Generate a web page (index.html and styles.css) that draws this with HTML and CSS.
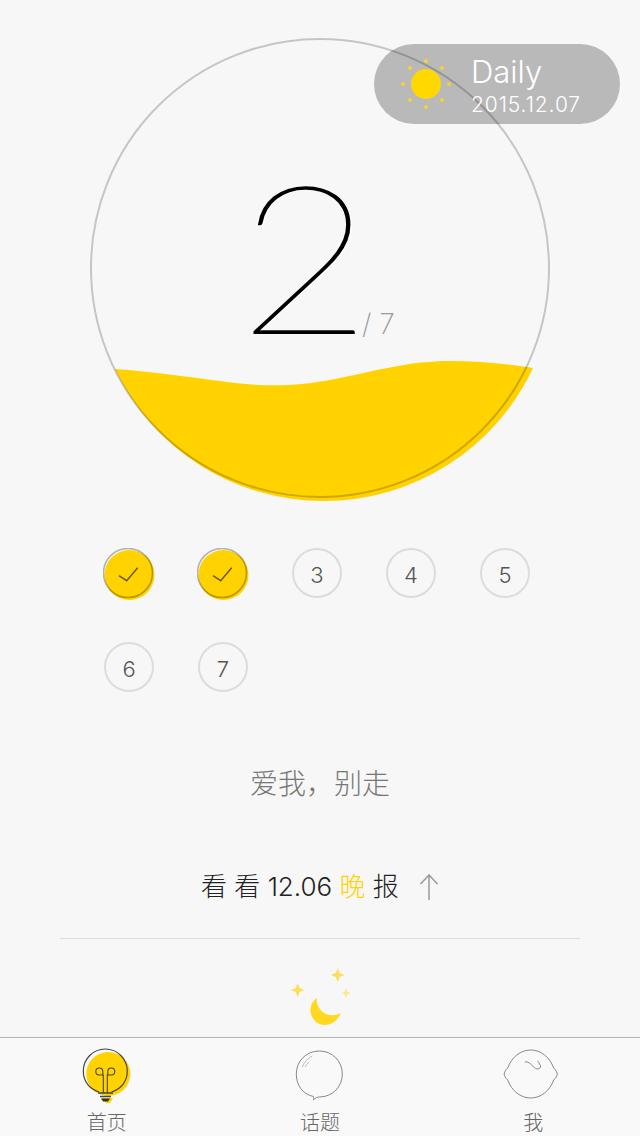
FILE: index.html
```html
<!DOCTYPE html>
<html lang="en">
<head>
  <meta charset="UTF-8">
  <meta name="viewport" content="width=device-width, initial-scale=1.0">
  <title>Daily</title>
  <link rel="stylesheet" href="styles.css">
</head>
<body>
  <div class="page">
    <section class="hero">
      <svg class="gauge" width="640" height="510" viewBox="0 0 640 510">
        <path d="M115 369 C160 372 200 379 235 383 C270 387 300 386 335 379 C380 370 410 361 450 361 C480 361 510 364 533 368 A231 231 0 0 1 115 369 Z" fill="#ffd200"/>
        <circle cx="320" cy="268" r="229" fill="none" stroke="#000" stroke-opacity="0.2" stroke-width="2"/>
      </svg>
      <div class="count">
        <span class="count-num">2</span>
        <span class="count-total">/ 7</span>
      </div>
      <div class="pill">
        <svg width="52" height="52" viewBox="0 0 52 52">
          <circle cx="26" cy="26" r="15" fill="#ffd800"/>
          <g fill="#f6d335">
            <circle cx="26" cy="3" r="2"/>
            <circle cx="42" cy="10" r="2"/>
            <circle cx="49" cy="26" r="2"/>
            <circle cx="42" cy="42" r="2"/>
            <circle cx="26" cy="49" r="2"/>
            <circle cx="10" cy="42" r="2"/>
            <circle cx="3" cy="26" r="2"/>
            <circle cx="10" cy="10" r="2"/>
          </g>
        </svg>
        <div class="pill-text">
          <div class="pill-title">Daily</div>
          <div class="pill-date">2015.12.07</div>
        </div>
      </div>
    </section>

    <div class="days">
      <div class="day day-done">
        <svg width="54" height="54" viewBox="0 0 54 54">
          <circle cx="26.5" cy="27" r="25" fill="#ffd200"/>
          <circle cx="25" cy="25" r="24.5" fill="none" stroke="#000" stroke-opacity="0.28" stroke-width="1.6"/>
          <path d="M16 27.700 L23.700 32.700 L34.700 19.700" fill="none" stroke="#6b5a12" stroke-width="1.500"/>
        </svg>
      </div>
      <div class="day day-done">
        <svg width="54" height="54" viewBox="0 0 54 54">
          <circle cx="26.5" cy="27" r="25" fill="#ffd200"/>
          <circle cx="25" cy="25" r="24.5" fill="none" stroke="#000" stroke-opacity="0.28" stroke-width="1.6"/>
          <path d="M16 27.700 L23.700 32.700 L34.700 19.700" fill="none" stroke="#6b5a12" stroke-width="1.500"/>
        </svg>
      </div>
      <div class="day">3</div>
      <div class="day">4</div>
      <div class="day">5</div>
      <div class="day">6</div>
      <div class="day">7</div>
    </div>

    <p class="quote">爱我，别走</p>

    <div class="evening">
      <span>看 看 12.06 <em>晚</em> 报</span>
      <svg width="20" height="26" viewBox="0 0 20 26">
        <path d="M10 26 V1 M1.500 10 L10 1 L18.500 10" fill="none" stroke="#9a9a9a" stroke-width="1.500"/>
      </svg>
    </div>

    <div class="night">
      <svg width="70" height="60" viewBox="0 0 70 60">
        <path d="M31.700 31 C26 35 24.500 42 26 47 C28 54 34 58 40 58 C47 58 53 53 56 46 C50 49 44 49 39 46 C34 42 31 37 31.700 31 Z" fill="#ffd81f"/>
        <path d="M12.700 16 L14.700 21 L19.700 23 L14.700 25 L12.700 30 L10.700 25 L5.700 23 L10.700 21 Z" fill="#fbdf5c"/>
        <path d="M52.700 1 L54.700 6 L59.700 8 L54.700 10 L52.700 15 L50.700 10 L45.700 8 L50.700 6 Z" fill="#fbdf5c"/>
        <path d="M61 21.500 L62.300 24.700 L65.500 26 L62.300 27.300 L61 30.500 L59.700 27.300 L56.500 26 L59.700 24.700 Z" fill="#fbe68a"/>
      </svg>
    </div>

    <nav class="tabs">
      <a class="tab" href="#">
        <svg width="60" height="64" viewBox="0 0 60 64">
          <circle cx="31.300" cy="26" r="22" fill="#ffd200"/>
          <path d="M25 50 H36 L33 55 H29 Z" fill="#ffd200"/>
          <path d="M22 44 C12 41 6.300 33 6.300 23 C6.300 11 16 1 28.300 1 C40.500 1 50.300 11 50.300 23 C50.300 33 44.500 41 34.500 44" fill="none" stroke="#444" stroke-width="1.200"/>
          <path d="M26.300 45 V27 H22.300 A3.500 3.500 0 1 1 25.800 23.500 V27 M30.300 45 V27 H34.300 A3.500 3.500 0 1 0 30.800 23.500 V27" fill="none" stroke="#444" stroke-width="1.100"/>
          <path d="M21 45 H36 M23 48.500 H34" fill="none" stroke="#444" stroke-width="1.400"/>
          <path d="M24 50.500 H33 L31 53.500 H26 Z" fill="#333"/>
        </svg>
        <span>首页</span>
      </a>
      <a class="tab" href="#">
        <svg width="60" height="64" viewBox="0.7 1 60 64">
          <path d="M24 49.500 C13 47 7 38 7 27 C7 14 17 4 30 4 C43 4 53 14 53 27 C53 40 43 50 30 50 C28 50 26 51 24 53 C24.500 52 24.500 50.500 24 49.500 Z" fill="none" stroke="#888" stroke-width="1"/>
          <path d="M13 20 C15 15 19 11 23 9 M16 20 C17 18 18 16 20 15" fill="none" stroke="#bbb" stroke-width="1"/>
        </svg>
        <span>话题</span>
      </a>
      <a class="tab" href="#">
        <svg width="60" height="64" viewBox="2.3 2 60 64">
          <path d="M7 22 C11 11 20 4 30 4 C40 4 49 11 53 22 C55.500 24 56.500 27 56.500 28 C56.500 30 55 32 53 34 C49 45 40 52 30 52 C20 52 11 45 7 34 C5 32 3.500 30 3.500 28 C3.500 27 4.500 24 7 22 Z" fill="none" stroke="#888" stroke-width="1"/>
          <path d="M24 16 C27 15 30 18 33 21 C35 23 38 24 40 21 C40 19 38 17 37 15" fill="none" stroke="#888" stroke-width="1"/>
        </svg>
        <span>我</span>
      </a>
    </nav>
  </div>
</body>
</html>
```

FILE: styles.css
```css
body {
  margin: 0;
  background-color: #f7f7f7;
  font-family: "Inter", "Noto Sans CJK SC", sans-serif;
}

.page {
  width: 640px;
  height: 1136px;
  display: flex;
  flex-direction: column;
  overflow: hidden;
}

.hero {
  position: relative;
  height: 510px;
  flex: none;
}

.gauge {
  display: block;
}

.count {
  position: absolute;
  left: 239px;
  top: 135px;
  display: flex;
  align-items: baseline;
}

.count-num {
  font-family: "Lato", sans-serif;
  font-weight: 100;
  font-size: 207px;
  line-height: 238px;
  letter-spacing: -10px;
  color: #000;
  -webkit-text-stroke: 1.5px #000;
  text-shadow: 2px 1px 0 #fff;
  transform: scaleX(1.1);
  transform-origin: left center;
}

.count-total {
  margin-left: 13px;
  font-weight: 200;
  font-size: 28px;
  color: #999;
}

.pill {
  position: absolute;
  left: 374px;
  top: 44px;
  width: 246px;
  height: 80px;
  box-sizing: border-box;
  padding-left: 26px;
  display: flex;
  align-items: center;
  gap: 20px;
  border-radius: 40px;
  background-color: rgba(0, 0, 0, 0.25);
  color: #fff;
}

.pill-text {
  margin-left: -1px;
  padding-top: 3px;
}

.pill-title {
  font-weight: 300;
  font-size: 31px;
  line-height: 36px;
}

.pill-date {
  margin-top: 2px;
  font-weight: 300;
  font-size: 21px;
  line-height: 26px;
  letter-spacing: 0.9px;
}

.days {
  margin: 38px 0 0 104px;
  display: grid;
  grid-template-columns: repeat(5, 50px);
  grid-auto-rows: 50px;
  gap: 44px;
}

.day {
  box-sizing: border-box;
  padding-top: 3px;
  display: flex;
  align-items: center;
  justify-content: center;
  border: 2px solid #dcdcdc;
  border-radius: 50%;
  font-weight: 300;
  font-size: 22px;
  color: #555;
}

.day-done {
  padding: 0;
  border: none;
}

.day-done svg {
  display: block;
  margin: 0 -3px -4px -1px;
}

.quote {
  margin: 72px 0 0;
  text-align: center;
  font-weight: 300;
  font-size: 28px;
  line-height: 40px;
  color: #777;
}

.evening {
  margin-top: 62px;
  height: 36px;
  padding-left: 201px;
  display: flex;
  align-items: center;
  gap: 20px;
  font-weight: 300;
  font-size: 26px;
  color: #222;
}

.evening svg {
  margin-top: 5px;
}

.evening em {
  font-style: normal;
  color: #ffd200;
}

.night {
  margin: 36px 60px 0;
  height: 99px;
  box-sizing: border-box;
  padding-top: 28px;
  border-top: 1px solid #ddd;
  display: flex;
  justify-content: center;
}

.tabs {
  height: 98px;
  flex: none;
  display: flex;
  border-top: 1px solid #b4b4b4;
  background-color: #f9f9f9;
}

.tab {
  flex: 1;
  display: flex;
  flex-direction: column;
  align-items: center;
  padding-top: 10px;
  text-decoration: none;
  font-weight: 300;
  font-size: 20px;
  line-height: 24px;
  color: #666;
}

.tab svg {
  flex: none;
  margin-bottom: -1px;
}
```
